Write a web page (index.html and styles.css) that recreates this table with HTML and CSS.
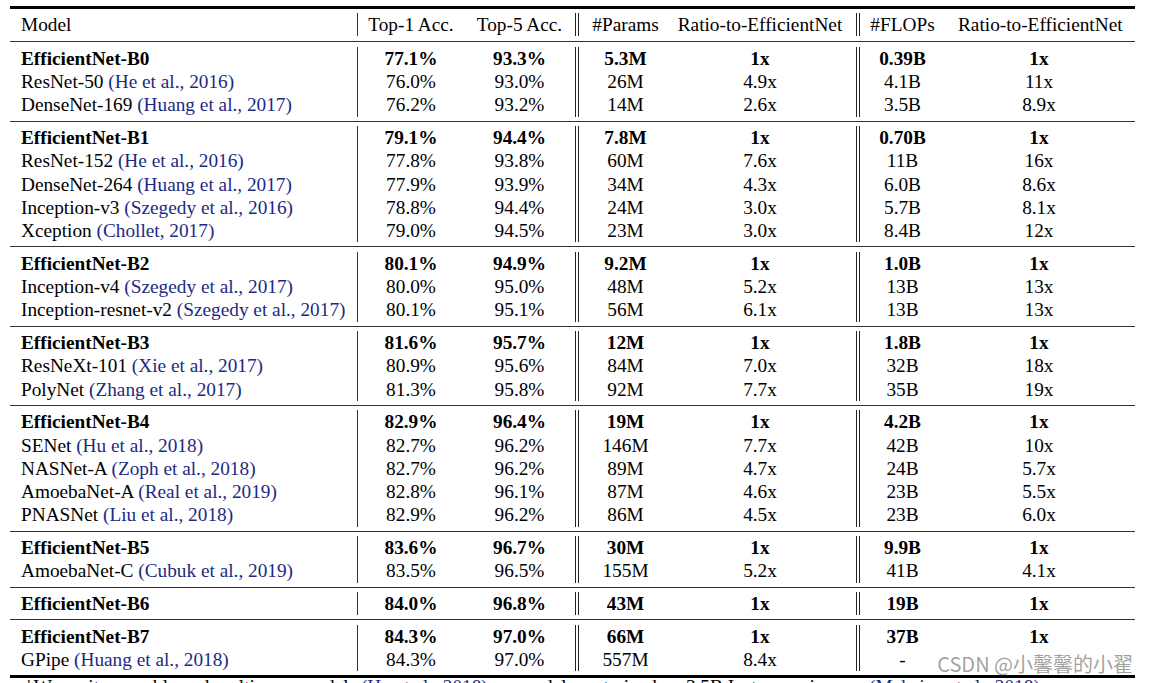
FILE: index.html
```html
<!DOCTYPE html>
<html>
<head>
<meta charset="utf-8">
<title>EfficientNet Performance Results</title>
<link rel="stylesheet" href="styles.css">
</head>
<body>
<div class="page">
  <div class="table">
    <div class="head">
      <div class="row">
        <div class="m">Model</div><div>Top-1 Acc.</div><div class="d">Top-5 Acc.</div><div>#Params</div><div class="d r1">Ratio-to-EfficientNet</div><div>#FLOPs</div><div class="r2">Ratio-to-EfficientNet</div>
      </div>
    </div>
    <div class="group first">
      <div class="row b"><div class="m">EfficientNet-B0</div><div>77.1%</div><div class="d">93.3%</div><div>5.3M</div><div class="d r1">1x</div><div>0.39B</div><div class="r2">1x</div></div>
      <div class="row"><div class="m">ResNet-50 <span class="cite">(He et al., 2016)</span></div><div>76.0%</div><div class="d">93.0%</div><div>26M</div><div class="d r1">4.9x</div><div>4.1B</div><div class="r2">11x</div></div>
      <div class="row"><div class="m">DenseNet-169 <span class="cite">(Huang et al., 2017)</span></div><div>76.2%</div><div class="d">93.2%</div><div>14M</div><div class="d r1">2.6x</div><div>3.5B</div><div class="r2">8.9x</div></div>
    </div>
    <div class="group">
      <div class="row b"><div class="m">EfficientNet-B1</div><div>79.1%</div><div class="d">94.4%</div><div>7.8M</div><div class="d r1">1x</div><div>0.70B</div><div class="r2">1x</div></div>
      <div class="row"><div class="m">ResNet-152 <span class="cite">(He et al., 2016)</span></div><div>77.8%</div><div class="d">93.8%</div><div>60M</div><div class="d r1">7.6x</div><div>11B</div><div class="r2">16x</div></div>
      <div class="row"><div class="m">DenseNet-264 <span class="cite">(Huang et al., 2017)</span></div><div>77.9%</div><div class="d">93.9%</div><div>34M</div><div class="d r1">4.3x</div><div>6.0B</div><div class="r2">8.6x</div></div>
      <div class="row"><div class="m">Inception-v3 <span class="cite">(Szegedy et al., 2016)</span></div><div>78.8%</div><div class="d">94.4%</div><div>24M</div><div class="d r1">3.0x</div><div>5.7B</div><div class="r2">8.1x</div></div>
      <div class="row"><div class="m">Xception <span class="cite">(Chollet, 2017)</span></div><div>79.0%</div><div class="d">94.5%</div><div>23M</div><div class="d r1">3.0x</div><div>8.4B</div><div class="r2">12x</div></div>
    </div>
    <div class="group">
      <div class="row b"><div class="m">EfficientNet-B2</div><div>80.1%</div><div class="d">94.9%</div><div>9.2M</div><div class="d r1">1x</div><div>1.0B</div><div class="r2">1x</div></div>
      <div class="row"><div class="m">Inception-v4 <span class="cite">(Szegedy et al., 2017)</span></div><div>80.0%</div><div class="d">95.0%</div><div>48M</div><div class="d r1">5.2x</div><div>13B</div><div class="r2">13x</div></div>
      <div class="row"><div class="m">Inception-resnet-v2 <span class="cite">(Szegedy et al., 2017)</span></div><div>80.1%</div><div class="d">95.1%</div><div>56M</div><div class="d r1">6.1x</div><div>13B</div><div class="r2">13x</div></div>
    </div>
    <div class="group">
      <div class="row b"><div class="m">EfficientNet-B3</div><div>81.6%</div><div class="d">95.7%</div><div>12M</div><div class="d r1">1x</div><div>1.8B</div><div class="r2">1x</div></div>
      <div class="row"><div class="m">ResNeXt-101 <span class="cite">(Xie et al., 2017)</span></div><div>80.9%</div><div class="d">95.6%</div><div>84M</div><div class="d r1">7.0x</div><div>32B</div><div class="r2">18x</div></div>
      <div class="row"><div class="m">PolyNet <span class="cite">(Zhang et al., 2017)</span></div><div>81.3%</div><div class="d">95.8%</div><div>92M</div><div class="d r1">7.7x</div><div>35B</div><div class="r2">19x</div></div>
    </div>
    <div class="group">
      <div class="row b"><div class="m">EfficientNet-B4</div><div>82.9%</div><div class="d">96.4%</div><div>19M</div><div class="d r1">1x</div><div>4.2B</div><div class="r2">1x</div></div>
      <div class="row"><div class="m">SENet <span class="cite">(Hu et al., 2018)</span></div><div>82.7%</div><div class="d">96.2%</div><div>146M</div><div class="d r1">7.7x</div><div>42B</div><div class="r2">10x</div></div>
      <div class="row"><div class="m">NASNet-A <span class="cite">(Zoph et al., 2018)</span></div><div>82.7%</div><div class="d">96.2%</div><div>89M</div><div class="d r1">4.7x</div><div>24B</div><div class="r2">5.7x</div></div>
      <div class="row"><div class="m">AmoebaNet-A <span class="cite">(Real et al., 2019)</span></div><div>82.8%</div><div class="d">96.1%</div><div>87M</div><div class="d r1">4.6x</div><div>23B</div><div class="r2">5.5x</div></div>
      <div class="row"><div class="m">PNASNet <span class="cite">(Liu et al., 2018)</span></div><div>82.9%</div><div class="d">96.2%</div><div>86M</div><div class="d r1">4.5x</div><div>23B</div><div class="r2">6.0x</div></div>
    </div>
    <div class="group">
      <div class="row b"><div class="m">EfficientNet-B5</div><div>83.6%</div><div class="d">96.7%</div><div>30M</div><div class="d r1">1x</div><div>9.9B</div><div class="r2">1x</div></div>
      <div class="row"><div class="m">AmoebaNet-C <span class="cite">(Cubuk et al., 2019)</span></div><div>83.5%</div><div class="d">96.5%</div><div>155M</div><div class="d r1">5.2x</div><div>41B</div><div class="r2">4.1x</div></div>
    </div>
    <div class="group">
      <div class="row b"><div class="m">EfficientNet-B6</div><div>84.0%</div><div class="d">96.8%</div><div>43M</div><div class="d r1">1x</div><div>19B</div><div class="r2">1x</div></div>
    </div>
    <div class="group">
      <div class="row b"><div class="m">EfficientNet-B7</div><div>84.3%</div><div class="d">97.0%</div><div>66M</div><div class="d r1">1x</div><div>37B</div><div class="r2">1x</div></div>
      <div class="row"><div class="m">GPipe <span class="cite">(Huang et al., 2018)</span></div><div>84.3%</div><div class="d">97.0%</div><div>557M</div><div class="d r1">8.4x</div><div>-</div><div class="r2"></div></div>
    </div>
  </div>
  <p class="foot">&#8224;We omit ensemble and multi-crop models <span class="cite">(Hu et al., 2018)</span>, or models pretrained on 3.5B Instagram images <span class="cite">(Mahajan et al., 2018)</span>.</p>
  <div class="wm">CSDN @小馨馨的小翟</div>
</div>
</body>
</html>
```

FILE: styles.css
```css
html, body {
  margin: 0;
  background: #fff;
}
body {
  font-family: "Liberation Serif", "Times New Roman", serif;
  font-size: 19.3px;
  color: #000;
}
.page {
  position: relative;
  box-sizing: border-box;
  height: 683px;
  overflow: hidden;
  padding: 6px 0 0 10px;
}
.table {
  width: 1125px;
  border-top: 3px solid #000;
  border-bottom: 3px solid #000;
}
.head {
  padding: 4px 0 5px;
}
.group {
  border-top: 1px solid #333;
  padding: 4.5px 0 4px;
}
.row {
  display: grid;
  grid-template-columns: 348px 106px 115px 93px 188px 85px 190px;
  height: 23.25px;
  line-height: 23.25px;
}
.row > div {
  box-sizing: border-box;
  text-align: center;
  white-space: nowrap;
}
.row > .m {
  text-align: left;
  padding-left: 11px;
  border-right: 1px solid #333;
}
.row > .d {
  border-right: 4px double #222;
}
.row > .r1 {
  padding-right: 8px;
}
.row > .r2 {
  padding: 0 15px 0 13px;
}
.b {
  font-weight: bold;
}
.cite {
  color: #1c2a84;
  font-weight: normal;
}
.foot {
  margin: 0;
  padding-left: 14px;
  line-height: 17px;
  white-space: nowrap;
}
.wm {
  position: absolute;
  right: 16px;
  top: 653px;
  font-family: "Noto Sans CJK SC", "Noto Sans", sans-serif;
  font-size: 20px;
  line-height: 21px;
  color: rgba(130, 130, 130, 0.75);
}
```
